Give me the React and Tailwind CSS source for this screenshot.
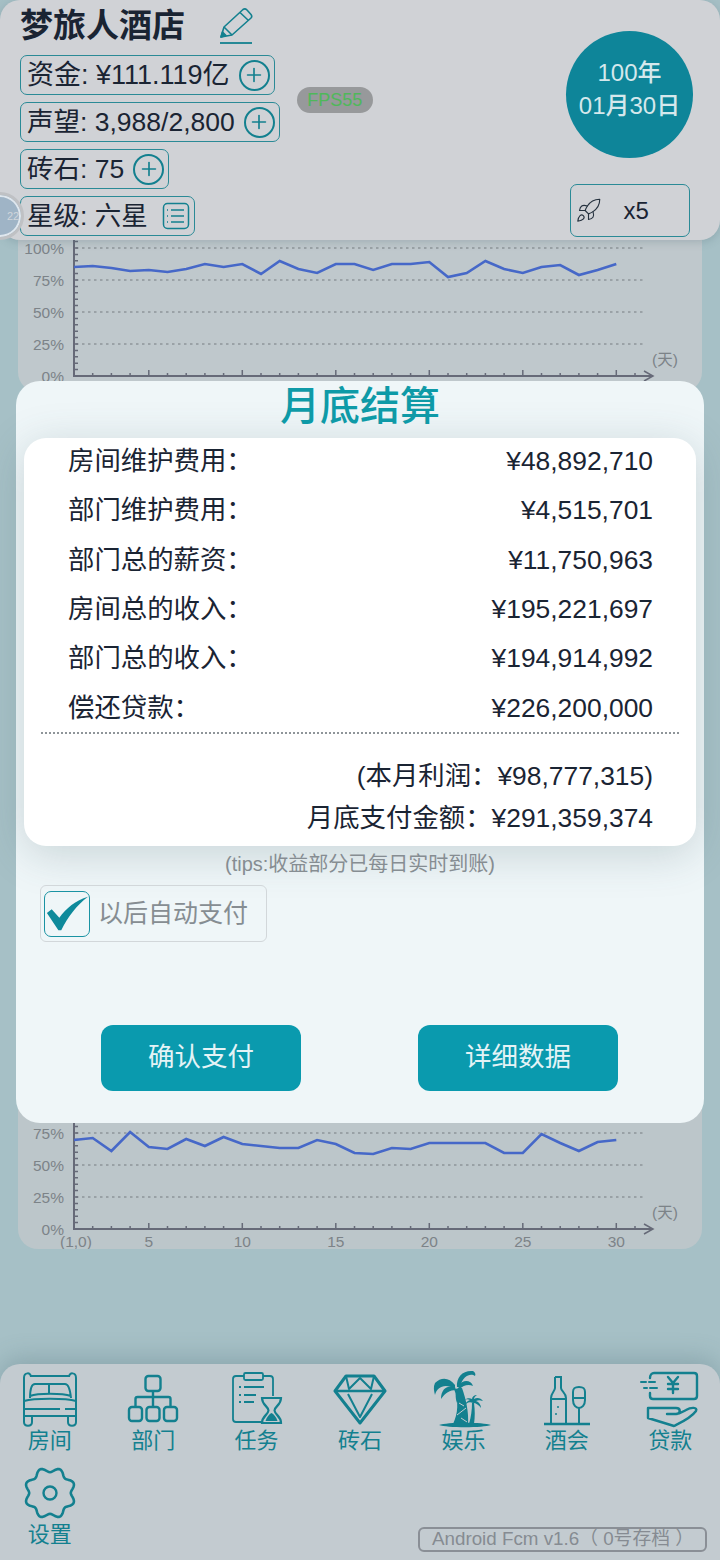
import { Plus, Rocket } from "lucide-react";

const days = (n) => 74 + (n - 1) * 18.7;

const line1 = [267, 266, 268, 271, 270, 272, 269, 264, 267, 264, 274, 261, 269, 273, 264, 264, 270, 264, 264, 262, 277, 273, 261, 269, 273, 267, 265, 275, 270, 264];
const line2 = [1140, 1138, 1151, 1132, 1147, 1149, 1139, 1146, 1137, 1144, 1146, 1148, 1148, 1140, 1144, 1153, 1154, 1148, 1149, 1143, 1143, 1143, 1143, 1153, 1153, 1134, 1143, 1151, 1142, 1140];

const stats = [
  { label: "资金: ¥111.119亿", plus: true, size: "text-[27px]" },
  { label: "声望: 3,988/2,800", plus: true, size: "text-[26.500px]" },
  { label: "砖石: 75", plus: true, size: "text-[26.500px]" },
  { label: "星级: 六星", list: true, size: "text-[26.500px]" },
];

const rows = [
  ["房间维护费用:", "¥48,892,710"],
  ["部门维护费用:", "¥4,515,701"],
  ["部门总的薪资:", "¥11,750,963"],
  ["房间总的收入:", "¥195,221,697"],
  ["部门总的收入:", "¥194,914,992"],
  ["偿还贷款:", "¥226,200,000"],
];

// chart is drawn with its x axis at y=baseY inside the svg
function Chart({ points, top, height, baseY, labels, showX }) {
  const grid = labels.filter((l) => l.y !== baseY).map((l) => l.y);
  const ticks = [];
  for (let i = 1; i <= 31; i++) ticks.push(i);
  const minor = [];
  for (let y = baseY; y > 0; y -= 6.4) minor.push(y);
  return (
    <svg width="684" height={height} viewBox={`18 ${top} 684 ${height}`} className="block">
      {grid.map((y) => (
        <line key={y} x1="76" x2="645" y1={y} y2={y} stroke="#767c81" strokeWidth="1" strokeDasharray="2.500 3.500" />
      ))}
      <line x1="74" x2="74" y1={top} y2={baseY} stroke="#666a78" strokeWidth="2" />
      <line x1="73" x2="652" y1={baseY} y2={baseY} stroke="#666a78" strokeWidth="2" />
      <path d={`M644 ${baseY - 5}L653 ${baseY}L644 ${baseY + 5}`} fill="none" stroke="#666a78" strokeWidth="1.500" />
      {minor.map((y) => (
        <line key={y} x1="74" x2="78" y1={y} y2={y} stroke="#666a78" strokeWidth="1.500" />
      ))}
      {ticks.map((t) => (
        <line key={t} x1={days(t)} x2={days(t)} y1={baseY} y2={baseY - (t % 5 === 0 ? 6 : 3)} stroke="#666a78" strokeWidth="1.500" />
      ))}
      <polyline points={points.map((y, i) => `${days(i + 1)},${y}`).join(" ")} fill="none" stroke="#4668c8" strokeWidth="2.600" />
      {labels.map((l) => (
        <text key={l.t} x="64" y={l.y + 6} textAnchor="end" fontSize="15.500" fill="#7c8388">
          {l.t}
        </text>
      ))}
      <text x="652" y={baseY - 11} fontSize="15.500" fill="#7c8388">(天)</text>
      {showX &&
        [5, 10, 15, 20, 25, 30].map((d) => (
          <text key={d} x={days(d)} y={baseY + 18} textAnchor="middle" fontSize="15.500" fill="#7c8388">
            {d}
          </text>
        ))}
      {showX && (
        <text x="60" y={baseY + 18} fontSize="15.500" fill="#7c8388">(1,0)</text>
      )}
    </svg>
  );
}

function PencilIcon() {
  return (
    <svg width="34" height="38" viewBox="0 0 34 38" fill="none" stroke="#13808f" strokeWidth="1.600" strokeLinejoin="round">
      <path d="M2 30L5 20L24 2.500Q26 1 28 3L32 7.500Q33.500 9.500 32 11L13 28Z" />
      <path d="M5 20L13 28M21 5.500L29.500 13.500" />
      <path d="M2 30L3.500 25L7 28.500Z" fill="#13808f" />
      <path d="M1 36H33" strokeWidth="1.800" />
    </svg>
  );
}

function BedIcon() {
  return (
    <svg width="56" height="56" viewBox="0 0 56 56" fill="none" stroke="#13808f" strokeWidth="2">
      <path d="M2 7c0-6 7-6 7-1M47 6c0-5 7-5 7 1M9 5h38" />
      <path d="M2 7v44c0 5 8 5 8 0v-6h36v6c0 5 8 5 8 0V7" />
      <path d="M2 30c10-3 42-3 52 0M2 38h36M43 38h11M2 45h52" />
      <path d="M8 27c0-10 2-14 5-14h30c3 0 5 4 6 14M8 25c8-3 32-3 41 0M27 13v10" />
    </svg>
  );
}

function OrgIcon() {
  return (
    <svg width="52" height="54" viewBox="0 0 52 54" fill="none" stroke="#13808f" strokeWidth="2.400">
      <rect x="18.500" y="4" width="15" height="15" rx="3" />
      <rect x="2" y="35" width="13" height="14" rx="3" />
      <rect x="19.500" y="35" width="13" height="14" rx="3" />
      <rect x="37" y="35" width="13" height="14" rx="3" />
      <path d="M26 19v16M8.500 35v-8a2 2 0 0 1 2-2h31a2 2 0 0 1 2 2v8" />
    </svg>
  );
}

function TaskIcon() {
  return (
    <svg width="54" height="56" viewBox="0 0 54 56" fill="none" stroke="#13808f" strokeWidth="1.800">
      <path d="M14 5H6a3 3 0 0 0-3 3v40a3 3 0 0 0 3 3h26M33 5h7a3 3 0 0 1 3 3v17" />
      <rect x="14" y="2" width="19" height="7" rx="1.500" />
      <path d="M9 16h2M14 16h20M9 24h2M14 24h12M9 31h2M14 31h10" />
      <path d="M32 27h19c0 7-6 8-6.500 12.500C45 44 51 45 51 52H32c0-7 6-8 6.500-12.500C38 35 32 34 32 27Z" strokeWidth="2.200" />
      <path d="M35.500 50c1-4 4-7 6-8 2 1 5 4 6 8Z" fill="#13808f" stroke="none" />
    </svg>
  );
}

function DiamondIcon() {
  return (
    <svg width="54" height="52" viewBox="0 0 54 52" fill="none" stroke="#13808f" strokeWidth="2" strokeLinejoin="round">
      <path d="M13 3h28l11 15-25 32L2 18Z" strokeWidth="3" />
      <path d="M2 18h50" strokeWidth="2.400" />
      <path d="M13 3l3 13L27 5l11 11 3-13M15 21l12 23 12-23" />
    </svg>
  );
}

function PalmIcon() {
  return (
    <svg width="60" height="60" viewBox="0 0 60 60" fill="#13808f">
      <path d="M24 18C23 8 30 1 40 2C42 3 43 5 42 7C38 4 30 6 27 18Z" />
      <path d="M22 16C16 8 8 8 2 14C0 18 1 22 2 26C4 18 12 14 22 20Z" />
      <path d="M25 17C30 10 38 11 40 17C36 15 30 16 27 20Z" />
      <path d="M22 18C14 16 8 20 8 30C12 24 17 21 23 21Z" />
      <path d="M26 18C22 22 22 28 24 34C26 28 26 24 29 20Z" />
      <path d="M21 20L29 19C33 30 36 44 35 55H20C25 45 26 32 21 20Z" />
      <path d="M26 34l5 3M24 46l9-7M28 49l6 4" fill="none" stroke="#c3cbd0" strokeWidth="1" />
      <path d="M41 34c1 7 1 14 0 21h-5c2-7 3-14 3-21Z" />
      <path d="M40 34c-4-2-7 0-9 4 1-4 3-6 6-7-2-1-4-1-6 0 3-2 6-2 8-1 0-2 2-4 5-4-2 1-3 3-3 4 3-2 7-1 9 2-3-1-5-1-7 0 3 1 5 4 5 7-2-3-5-5-8-5Z" />
      <path d="M6 56c8-3 44-3 52 0-8 3-44 3-52 0Z" />
    </svg>
  );
}

function DrinkIcon() {
  return (
    <svg width="48" height="54" viewBox="0 0 48 54" fill="none" stroke="#13808f" strokeWidth="2">
      <path d="M12 5h6v11c0 3 5 5 5 10v25M12 5v11c0 3-4 5-4 10v25M8 27h15" />
      <circle cx="15" cy="35" r="1" fill="#13808f" stroke="none" />
      <circle cx="13" cy="42" r="1" fill="#13808f" stroke="none" />
      <path d="M30 20c0-4 2-5 6-5s6 1 6 5v8c0 5-3 8-6 8s-6-3-6-8ZM30 26h12M36 36v15" />
      <path d="M1 52h46" strokeWidth="2.400" />
    </svg>
  );
}

function LoanIcon() {
  return (
    <svg width="60" height="58" viewBox="0 0 60 58" fill="none" stroke="#13808f" strokeWidth="2.400" strokeLinecap="round" strokeLinejoin="round">
      <path d="M10 8c0-3 2-5 4-5h40c2 0 3 1 3 3v20c0 2-1 3-3 3H13c-2 0-3-1-3-3v-3" />
      <path d="M1 12h5M9 12h6M4 18h3M10 18h7" strokeWidth="2" />
      <path d="M28 7l5 6 5-6M33 13v10M28 14h10M28 19h10" />
      <path d="M27 44h9c4 0 6-2 10-4 5-3 12-3 10 1-5 7-14 11-22 15L8 48V38H36c5 0 5 6 0 6" />
    </svg>
  );
}

function GearIcon() {
  // eight rounded lobes, with a valley on each axis
  const pts = [];
  for (let i = 0; i < 144; i++) {
    const a = (i / 144) * Math.PI * 2;
    const r = 23.2 - 2.4 * Math.cos(8 * a);
    pts.push(`${(27 + r * Math.sin(a)).toFixed(2)},${(27 - r * Math.cos(a)).toFixed(2)}`);
  }
  return (
    <svg width="54" height="54" viewBox="0 0 54 54" fill="none" stroke="#13808f" strokeWidth="2.600" strokeLinejoin="round">
      <polygon points={pts.join(" ")} />
      <circle cx="27" cy="27" r="6.500" strokeWidth="2.400" />
    </svg>
  );
}

const nav = [
  { label: "房间", Icon: BedIcon },
  { label: "部门", Icon: OrgIcon },
  { label: "任务", Icon: TaskIcon },
  { label: "砖石", Icon: DiamondIcon },
  { label: "娱乐", Icon: PalmIcon },
  { label: "酒会", Icon: DrinkIcon },
  { label: "贷款", Icon: LoanIcon },
  { label: "设置", Icon: GearIcon },
];

const font = "font-['Liberation_Sans','Noto_Sans_CJK_SC',sans-serif]";

export default function App() {
  return (
    <div className={`relative h-[1560px] w-[720px] overflow-hidden bg-[#a6c0c6] ${font} text-[#1a2433]`}>
      {/* Header */}
      <header className="relative z-10 flex h-[240px] justify-between rounded-[20px] bg-[#d0d2d6] pl-[20px] pr-[27px] shadow-[0_2px_8px_rgba(70,100,110,0.25)]">
        <div className="flex flex-col items-start">
          <div className="flex h-[50px] items-center gap-[34px] pt-[2px]">
            <h1 className="text-[33px] font-bold">梦旅人酒店</h1>
            <PencilIcon />
          </div>
          <div className="mt-[5px] flex flex-col items-start gap-[7px]">
            {stats.map((s) => (
              <div key={s.label} className={`flex h-[40px] items-center gap-[9px] rounded-[7px] border border-[#2a8a96] pl-[6px] pr-[4px] leading-none ${s.size}`}>
                <span>{s.label}</span>
                {s.plus && (
                  <span className="flex h-[31px] w-[31px] items-center justify-center rounded-full border-2 border-[#13808f]">
                    <Plus size={22} strokeWidth={1.8} color="#13808f" />
                  </span>
                )}
                {s.list && (
                  <svg width="28" height="28" viewBox="0 0 28 28" fill="none" stroke="#13808f" strokeWidth="1.500" className="ml-[5px]">
                    <rect x="1.500" y="1.500" width="25" height="25" rx="4" />
                    <path d="M9 8h13M9 14h13M9 20h13M5 8h1M5 14h1M5 20h1" />
                  </svg>
                )}
              </div>
            ))}
          </div>
        </div>

        <div className="mt-[87px] ml-[17px] mr-auto flex h-[26px] w-[76px] items-center justify-center rounded-full bg-[#97999b] text-[18px] text-[#4fb85a]">
          FPS55
        </div>

        <div className="flex flex-col items-center">
          <div className="mt-[31px] flex h-[127px] w-[127px] flex-col items-center justify-center rounded-full bg-[#0e8599] pb-[12px] text-[24px] font-medium leading-[33px] text-[#d5e8ec]">
            <span>100年</span>
            <span>01月30日</span>
          </div>
          <div className="relative mt-[26px] flex h-[53px] w-[120px] items-center rounded-[7px] border border-[#2a8a96] pl-[4px] text-[24px]">
            <Rocket size={27} strokeWidth={1} color="#26323f" />
            <span className="ml-[22px]">x5</span>
          </div>
        </div>
      </header>

      {/* level badge half out of the page */}
      <div className="absolute left-[-24px] top-[192px] z-20 flex h-[48px] w-[48px] items-center justify-center rounded-full border-[3px] border-[#bfc1c4] bg-[#9fb4c6] pl-[26px] text-[11px] text-[#d0d6dc] shadow-[inset_0_0_0_2px_#dfe7ee]">
        22
      </div>

      {/* Charts behind the dialog */}
      <main className="mx-[18px] flex flex-col">
        <div className="h-[152px] overflow-hidden rounded-b-[20px] bg-[#bfc8cc]">
          <Chart
            points={line1}
            top={240}
            height={152}
            baseY={376}
            labels={[
              { t: "100%", y: 248 },
              { t: "75%", y: 280 },
              { t: "50%", y: 312 },
              { t: "25%", y: 344 },
              { t: "0%", y: 376 },
            ]}
          />
        </div>
        <div className="mt-[700px] h-[157px] overflow-hidden rounded-b-[20px] bg-[#bcc6ca]">
          <Chart
            points={line2}
            top={1092}
            height={157}
            baseY={1229}
            labels={[
              { t: "75%", y: 1133 },
              { t: "50%", y: 1165 },
              { t: "25%", y: 1197 },
              { t: "0%", y: 1229 },
            ]}
            showX
          />
        </div>
      </main>

      {/* Bottom nav */}
      <footer className="absolute inset-x-0 bottom-0 h-[196px] rounded-t-[20px] bg-[#c3cbd0] shadow-[0_-6px_24px_rgba(70,100,110,0.28)]">
        <div className="-ml-[2px] grid w-[724px] grid-cols-7 pt-[6px]">
          {nav.map(({ label, Icon }) => (
            <div key={label} className="flex h-[94px] flex-col items-center text-[22px] leading-[28px] text-[#13808f]">
              <div className="flex h-[58px] items-center">
                <Icon />
              </div>
              <span className="-mt-[1px]">{label}</span>
            </div>
          ))}
        </div>
        <div className="absolute bottom-[8px] right-[13px] flex h-[25px] w-[289px] items-center rounded-[6px] border-2 border-[#8a8f96] pl-[12px] text-[18.800px] text-[#868b92]">
          Android Fcm v1.6（ 0号存档 ）
        </div>
      </footer>

      {/* Dialog */}
      <div className="absolute left-[16px] top-[381px] z-30 h-[742px] w-[688px] rounded-[24px] bg-[#eff6f8]">
        <h2 className="h-[57px] text-center text-[40px] font-medium leading-[50px] text-[#0e9aa7]">月底结算</h2>
        <div className="mx-[8px] h-[408px] rounded-[22px] bg-white shadow-[0_8px_44px_rgba(60,90,100,0.22)]">
          <div className="pl-[44px] pr-[43px]">
            {rows.map(([k, v]) => (
              <div key={k} className="flex h-[49.400px] -translate-y-[1px] items-center justify-between text-[26.400px]">
                <span>{k.replace(":", "：")}</span>
                <span>{v}</span>
              </div>
            ))}
          </div>
          <div className="mx-[17px] mt-[-2px] border-t-2 border-dotted border-[#8f9599]" />
          <div className="pr-[43px] pt-[21px] text-right text-[26.400px] leading-[42px]">
            <div>(本月利润：¥98,777,315)</div>
            <div>月底支付金额：¥291,359,374</div>
          </div>
        </div>
        <p className="mt-[6px] text-center text-[20px] leading-[24px] text-[#868d92]">(tips:收益部分已每日实时到账)</p>
        <div className="ml-[24px] mt-[9px] flex h-[57px] w-[227px] items-center gap-[8px] rounded-[6px] border border-[#d2d7da] pl-[3px] text-[25px] text-[#868d92]">
          <span className="flex h-[46px] w-[46px] items-center justify-center rounded-[7px] border border-[#1a93a3]">
            <svg width="46" height="36" viewBox="0 0 46 36">
              <path d="M2 17l5-4 8 9C22 12 32 4 45 0 33 9 24 21 17 35h-3Z" fill="#0e8a9b" />
            </svg>
          </span>
          <span>以后自动支付</span>
        </div>
        <div className="mt-[83px] flex pl-[85px]">
          <button className="h-[66px] w-[200px] rounded-[12px] bg-[#0a9aae] text-[26.500px] text-[#e4f3f6]">确认支付</button>
          <button className="ml-[117px] h-[66px] w-[200px] rounded-[12px] bg-[#0a9aae] text-[26.500px] text-[#e4f3f6]">详细数据</button>
        </div>
      </div>
    </div>
  );
}
